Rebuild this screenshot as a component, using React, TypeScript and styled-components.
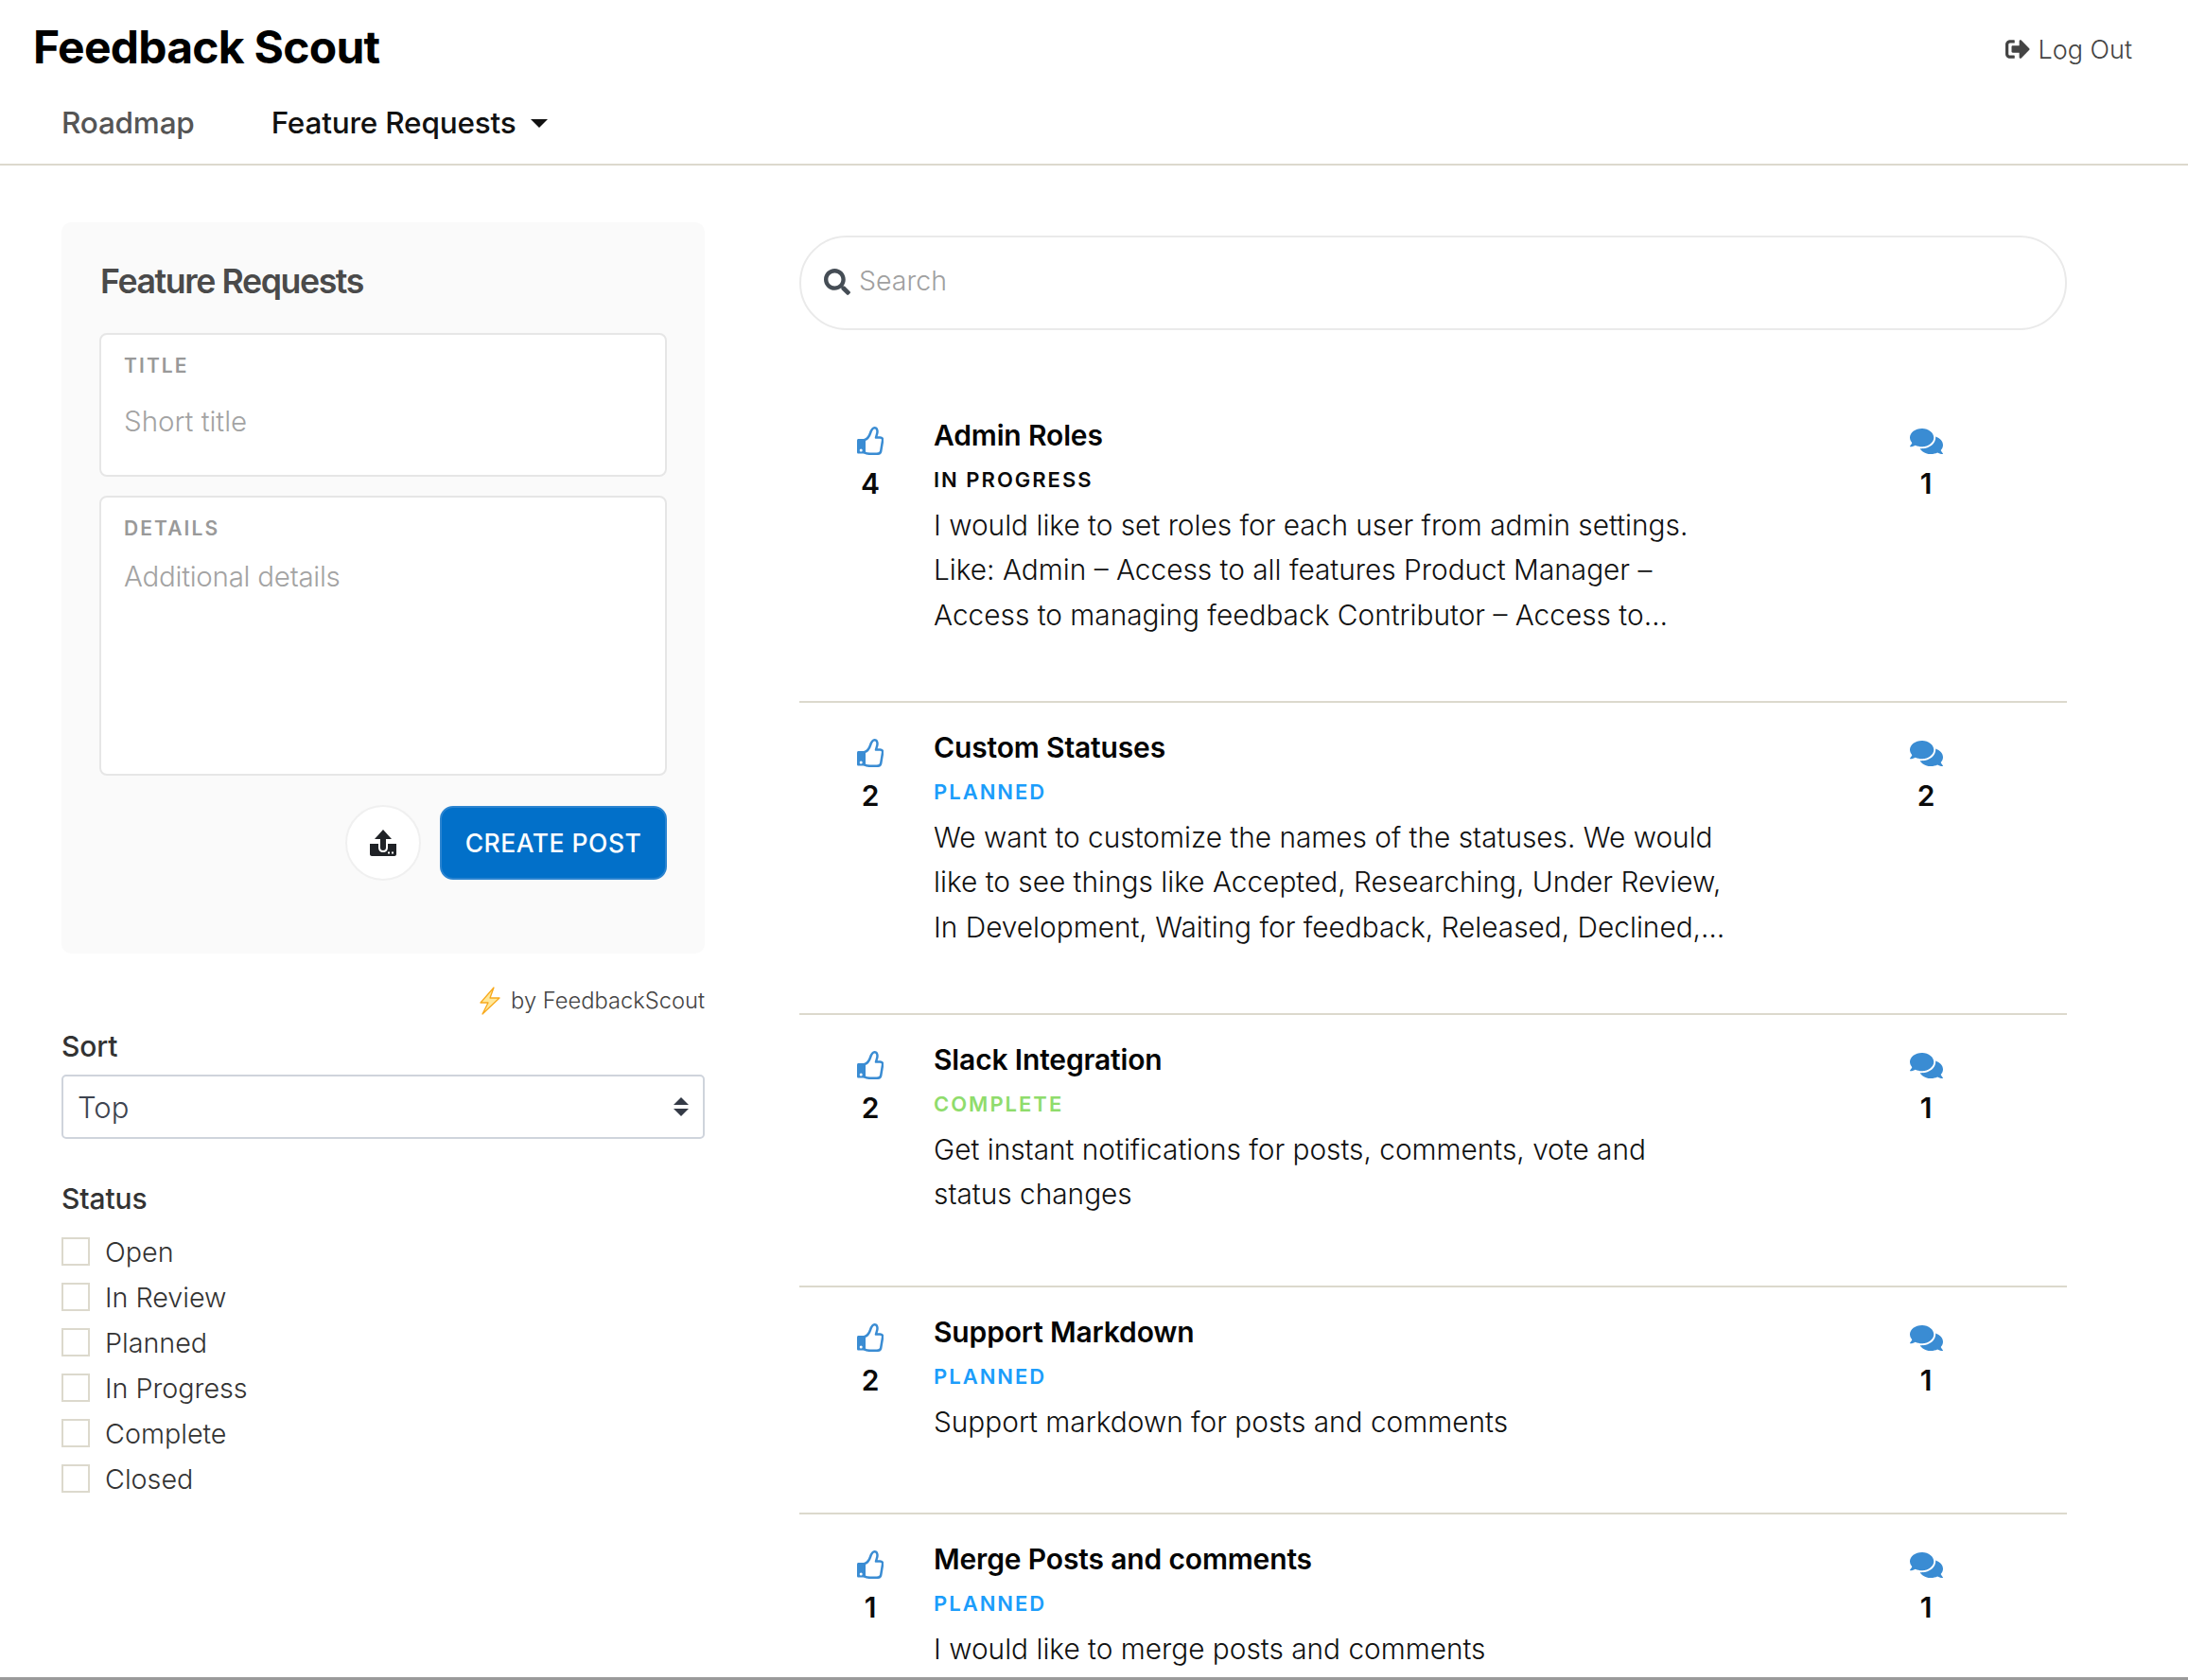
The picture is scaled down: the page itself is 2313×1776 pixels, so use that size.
import React from 'react'
import styled, { createGlobalStyle } from 'styled-components'
import { FaSearch, FaSignOutAlt, FaComments } from 'react-icons/fa'

const GlobalStyle = createGlobalStyle`
    html, body {
        margin: 0;
        padding: 0;
        background: #fff;
        height: 100%;
        overflow: hidden;
    }

    body {
        font-family: Inter, 'Liberation Sans', sans-serif;
        color: #000;
    }
`

const STATUS_COLORS: Record<string, string> = {
    'IN PROGRESS': '#0a0a0a',
    PLANNED: '#1c9dfb',
    COMPLETE: '#8fdc6c',
}

const POSTS = [
    {
        title: 'Admin Roles',
        status: 'IN PROGRESS',
        votes: 4,
        comments: 1,
        height: 330,
        lines: [
            'I would like to set roles for each user from admin settings.',
            'Like: Admin – Access to all features Product Manager –',
            'Access to managing feedback Contributor – Access to…',
        ],
    },
    {
        title: 'Custom Statuses',
        status: 'PLANNED',
        votes: 2,
        comments: 2,
        height: 330,
        lines: [
            'We want to customize the names of the statuses. We would',
            'like to see things like Accepted, Researching, Under Review,',
            'In Development, Waiting for feedback, Released, Declined,…',
        ],
    },
    {
        title: 'Slack Integration',
        status: 'COMPLETE',
        votes: 2,
        comments: 1,
        height: 288,
        lines: ['Get instant notifications for posts, comments, vote and', 'status changes'],
    },
    {
        title: 'Support Markdown',
        status: 'PLANNED',
        votes: 2,
        comments: 1,
        height: 240,
        lines: ['Support markdown for posts and comments'],
    },
    {
        title: 'Merge Posts and comments',
        status: 'PLANNED',
        votes: 1,
        comments: 1,
        height: 240,
        lines: ['I would like to merge posts and comments'],
    },
]

const FILTERS = ['Open', 'In Review', 'Planned', 'In Progress', 'Complete', 'Closed']

const UploadIcon = () => (
    <svg width='28' height='28' viewBox='0 0 28 28'>
        <path fill='#1f2226' d='M14 0 L23 10 H17 V19 C17 21 16 22 14 22 C12 22 11 21 11 19 V10 H5 Z' />
        <path
            fill='#1f2226'
            d='M0 15 H9 V19 C9 22 11 24 14 24 C17 24 19 22 19 19 V15 H28 V26 C28 27 27 28 26 28 H2 C1 28 0 27 0 26 Z'
        />
        <rect x='19' y='23.5' width='2' height='2' fill='#fff' />
        <rect x='23' y='23.5' width='2' height='2' fill='#fff' />
    </svg>
)

const BoltIcon = () => (
    <svg width='22' height='30' viewBox='0 0 22 30'>
        <path
            d='M15 1 L1 17 H9 L3 29 L21 12 H11 Z'
            fill='#ffe89a'
            stroke='#f8a91c'
            strokeWidth='1.3'
            strokeLinejoin='round'
        />
    </svg>
)

const CaretIcon = () => (
    <svg width='18' height='9' viewBox='0 0 18 9'>
        <path d='M0 0 H18 L9 9 Z' fill='#111' />
    </svg>
)

const ThumbIcon = () => (
    <svg width='28' height='30' viewBox='0 0 28 30'>
        <path
            d='M1.5 13 H9 V28.5 H1.5 C0.6 28.5 0 28 0 27 V14.5 C0 13.6 0.6 13 1.5 13 Z'
            fill='#3a8cd3'
        />
        <circle cx='4.2' cy='25' r='1.5' fill='#fff' />
        <path
            d='M8 14 C11 13 13 10 14 7 C15 4 16 1.3 18.5 1.3 C21.5 1.3 22 5 21 8 L20 11.5 H24.5 C26.6 11.5 27.4 13 27 15 L25.2 26 C24.8 28.4 23 28.8 21 28.8 H14 C11 28.8 9.5 28.4 8 27.5'
            fill='none'
            stroke='#3a8cd3'
            strokeWidth='2.5'
            strokeLinejoin='round'
            strokeLinecap='round'
        />
    </svg>
)

const SortIcon = () => (
    <svg width='16' height='20' viewBox='0 0 16 20'>
        <path d='M8 0 L16 8 H0 Z M0 12 H16 L8 20 Z' fill='#343a46' />
    </svg>
)

const App = () => {
    return (
        <Page>
            <GlobalStyle />
            <Header>
                <Brand>
                    <Logo>Feedback Scout</Logo>
                    <LogOut>
                        <FaSignOutAlt size={26} />
                        Log Out
                    </LogOut>
                </Brand>
                <Nav>
                    <NavLink>Roadmap</NavLink>
                    <NavLink $active>
                        Feature Requests
                        <CaretIcon />
                    </NavLink>
                </Nav>
            </Header>

            <Main>
                <Sidebar>
                    <FormCard>
                        <FormTitle>Feature Requests</FormTitle>
                        <FieldBox $height={152}>
                            <FieldLabel>TITLE</FieldLabel>
                            <Placeholder>Short title</Placeholder>
                        </FieldBox>
                        <FieldBox $height={296}>
                            <FieldLabel>DETAILS</FieldLabel>
                            <Placeholder $tight>Additional details</Placeholder>
                        </FieldBox>
                        <FormActions>
                            <AttachButton>
                                <UploadIcon />
                            </AttachButton>
                            <CreateButton>CREATE POST</CreateButton>
                        </FormActions>
                    </FormCard>

                    <PoweredBy>
                        <BoltIcon />
                        by FeedbackScout
                    </PoweredBy>

                    <FilterLabel>Sort</FilterLabel>
                    <SortSelect>
                        Top
                        <SortIcon />
                    </SortSelect>

                    <FilterLabel $status>Status</FilterLabel>
                    <CheckList>
                        {FILTERS.map((name) => (
                            <CheckRow key={name}>
                                <CheckBox />
                                {name}
                            </CheckRow>
                        ))}
                    </CheckList>
                </Sidebar>

                <Content>
                    <SearchBar>
                        <FaSearch size={28} color='#454d55' />
                        <SearchText>Search</SearchText>
                    </SearchBar>
                    <PostList>
                        {POSTS.map((post) => (
                            <Post key={post.title} $height={post.height}>
                                <Counter>
                                    <IconSlot>
                                        <ThumbIcon />
                                    </IconSlot>
                                    <Count>{post.votes}</Count>
                                </Counter>
                                <PostBody>
                                    <PostTitle>{post.title}</PostTitle>
                                    <PostStatus $color={STATUS_COLORS[post.status]}>{post.status}</PostStatus>
                                    <PostText>
                                        {post.lines.map((line) => (
                                            <div key={line}>{line}</div>
                                        ))}
                                    </PostText>
                                </PostBody>
                                <CommentCounter>
                                    <IconSlot>
                                        <FaComments size={35} color='#3a8cd3' />
                                    </IconSlot>
                                    <Count>{post.comments}</Count>
                                </CommentCounter>
                            </Post>
                        ))}
                    </PostList>
                </Content>
            </Main>
        </Page>
    )
}

const Page = styled.div`
    height: 1776px;
    overflow: hidden;
    border-bottom: 3px solid #9a9a9a;
    box-sizing: border-box;
`

const Header = styled.header`
    height: 175px;
    box-sizing: border-box;
    border-bottom: 2px solid #dcd9cd;
`

const Brand = styled.div`
    display: flex;
    justify-content: space-between;
    align-items: center;
    box-sizing: border-box;
    height: 102px;
    padding: 0 59px 3px 35px;
`

const Logo = styled.div`
    font-size: 48px;
    font-weight: 700;
    letter-spacing: -0.75px;
    color: #000;
`

const LogOut = styled.div`
    display: flex;
    align-items: center;
    gap: 8px;
    margin-top: 5px;
    font-size: 27px;
    font-weight: 300;
    color: #444;
`

const Nav = styled.nav`
    display: flex;
    gap: 81px;
    padding-left: 65px;
`

const NavLink = styled.div<{ $active?: boolean }>`
    display: flex;
    align-items: center;
    gap: 16px;
    font-size: 31.5px;
    line-height: 56px;
    font-weight: 500;
    letter-spacing: -0.2px;
    color: ${(p) => (p.$active ? '#111' : '#555')};
`

const Main = styled.main`
    display: flex;
    align-items: flex-start;
    gap: 100px;
    padding: 60px 0 0 65px;
`

const Sidebar = styled.aside`
    width: 680px;
    flex-shrink: 0;
`

const FormCard = styled.section`
    box-sizing: border-box;
    height: 773px;
    padding: 40px 40px 0;
    border-radius: 10px;
    background: #fafafa;
`

const FormTitle = styled.h2`
    margin: 0 0 33px 1px;
    font-size: 35.7px;
    line-height: 44px;
    font-weight: 600;
    letter-spacing: -1.4px;
    color: #4a4a4a;
`

const FieldBox = styled.div<{ $height: number }>`
    box-sizing: border-box;
    height: ${(p) => p.$height}px;
    margin-bottom: 20px;
    padding: 21px 24px;
    background: #fff;
    border: 2px solid #e6e6e6;
    border-radius: 8px;
`

const FieldLabel = styled.div`
    font-size: 21px;
    line-height: 24px;
    font-weight: 600;
    letter-spacing: 2.1px;
    color: #999;
`

const Placeholder = styled.div<{ $tight?: boolean }>`
    margin-top: ${(p) => (p.$tight ? '20px' : '28px')};
    font-size: 29.5px;
    line-height: 36px;
    font-weight: 300;
    letter-spacing: ${(p) => (p.$tight ? '-0.25px' : '0')};
    color: #a3a3a3;
`

const FormActions = styled.div`
    display: flex;
    justify-content: flex-end;
    align-items: center;
    gap: 20px;
    margin-top: 31px;
`

const AttachButton = styled.div`
    display: flex;
    align-items: center;
    justify-content: center;
    width: 80px;
    height: 80px;
    box-sizing: border-box;
    background: #fff;
    border: 2px solid #f0f0f0;
    border-radius: 50%;
`

const CreateButton = styled.div`
    display: flex;
    align-items: center;
    justify-content: center;
    width: 240px;
    height: 78px;
    box-sizing: border-box;
    background: #0270c9;
    border: 2px solid #2b84d0;
    border-radius: 14px;
    font-size: 26.5px;
    font-weight: 500;
    letter-spacing: 0.5px;
    color: #fff;
`

const PoweredBy = styled.div`
    display: flex;
    justify-content: flex-end;
    align-items: center;
    gap: 11px;
    margin-top: 35px;
    font-size: 23.7px;
    line-height: 30px;
    font-weight: 300;
    color: #444;
`

const FilterLabel = styled.div<{ $status?: boolean }>`
    margin-top: ${(p) => (p.$status ? '45px' : '15px')};
    margin-bottom: 12px;
    font-size: 30px;
    line-height: 36px;
    font-weight: 500;
    letter-spacing: -0.1px;
    color: #333;
`

const SortSelect = styled.div`
    display: flex;
    justify-content: space-between;
    align-items: center;
    box-sizing: border-box;
    height: 68px;
    padding: 0 15px;
    border: 2px solid #cfd4dc;
    border-radius: 5px;
    font-size: 31px;
    font-weight: 300;
    color: #3d4450;
`

const CheckList = styled.div`
    display: flex;
    flex-direction: column;
    margin-top: 14px;
`

const CheckRow = styled.label`
    display: flex;
    align-items: center;
    gap: 16px;
    height: 48px;
    font-size: 28.7px;
    font-weight: 300;
    color: #333;
`

const CheckBox = styled.span`
    width: 30px;
    height: 30px;
    box-sizing: border-box;
    background: #fff;
    border: 2.5px solid #dcd9cd;
`

const Content = styled.div`
    width: 1340px;
    flex-shrink: 0;
`

const SearchBar = styled.div`
    display: flex;
    align-items: center;
    gap: 9px;
    box-sizing: border-box;
    height: 100px;
    margin-top: 14px;
    padding: 0 24px 2px;
    border: 2px solid #eaeaea;
    border-radius: 50px;
`

const SearchText = styled.span`
    padding-bottom: 3px;
    font-size: 28.5px;
    font-weight: 300;
    color: #a0a0a0;
`

const PostList = styled.div`
    margin-top: 64px;
`

const Post = styled.article<{ $height: number }>`
    display: flex;
    box-sizing: border-box;
    height: ${(p) => p.$height}px;
    padding-top: 28px;
    border-bottom: 2px solid #dcd9cd;
`

const Counter = styled.div`
    display: flex;
    flex-direction: column;
    align-items: center;
    width: 142px;
    padding: 9px 0 0 8px;
    box-sizing: border-box;
    gap: 11px;
`

const CommentCounter = styled(Counter)`
    width: 172px;
    margin-left: auto;
    margin-right: 63px;
    padding-left: 0;
`

const IconSlot = styled.div`
    display: flex;
    align-items: center;
    justify-content: center;
    height: 32px;
`

const Count = styled.div`
    font-size: 30px;
    line-height: 36px;
    font-weight: 600;
    color: #0a0a0a;
`

const PostBody = styled.div`
    flex: 1;
`

const PostTitle = styled.h3`
    margin: -1px 0 0;
    font-size: 30px;
    line-height: 40px;
    font-weight: 600;
    letter-spacing: -0.15px;
    color: #050505;
`

const PostStatus = styled.div<{ $color: string }>`
    margin-top: 11px;
    font-size: 22px;
    line-height: 32px;
    font-weight: 600;
    letter-spacing: 2px;
    color: ${(p) => p.$color};
`

const PostText = styled.div`
    margin-top: 8.5px;
    font-size: 29.8px;
    line-height: 47.5px;
    font-weight: 300;
    white-space: nowrap;
    color: #111;
`

export default App
